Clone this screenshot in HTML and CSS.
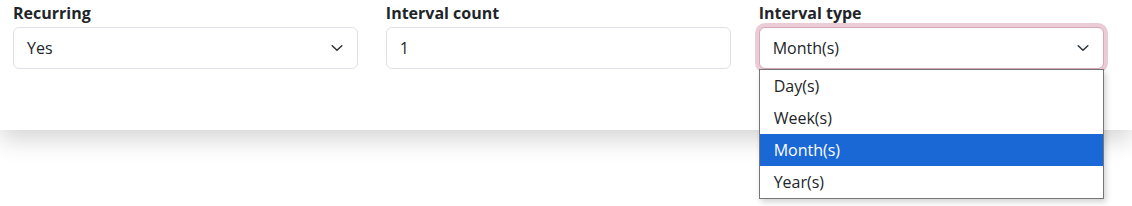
FILE: index.html
```html
<!DOCTYPE html>
<html lang="en">
<head>
  <meta charset="UTF-8">
  <meta name="viewport" content="width=device-width, initial-scale=1.0">
  <title>Recurring settings</title>
  <link rel="stylesheet" href="styles.css">
</head>
<body>

  <div class="card">
    <div class="row">

      <div class="field">
        <label class="field-label">Recurring</label>
        <div class="select">
          <span>Yes</span>
          <svg class="chevron" viewBox="0 0 16 16"><path d="m2 5 6 6 6-6"/></svg>
        </div>
      </div>

      <div class="field">
        <label class="field-label">Interval count</label>
        <div class="input">1</div>
      </div>

      <div class="field">
        <label class="field-label">Interval type</label>
        <div class="select focused">
          <span>Month(s)</span>
          <svg class="chevron" viewBox="0 0 16 16"><path d="m2 5 6 6 6-6"/></svg>
        </div>
        <!-- open native list -->
        <ul class="options">
          <li>Day(s)</li>
          <li>Week(s)</li>
          <li class="selected">Month(s)</li>
          <li>Year(s)</li>
        </ul>
      </div>

    </div>
  </div>

</body>
</html>
```

FILE: styles.css
```css
* {
  box-sizing: border-box;
  font-family: 'Open Sans', 'Noto Sans', sans-serif;
}

html, body {
  margin: 0;
  min-height: 206px;
  background-color: #fff;
}

.card {
  background: #fff;
  height: 130px;
  padding: 2px 28px 0 13px;
  box-shadow: 0 10px 22px rgba(0, 0, 0, 0.16);
  position: relative;
  z-index: 1;
}

.row {
  display: grid;
  grid-template-columns: repeat(3, 1fr);
  column-gap: 27.5px;
}

.field {
  position: relative;
}

.field-label {
  display: block;
  font-size: 16px;
  font-weight: 700;
  color: #212529;
  line-height: 22px;
  margin-bottom: 3px;
}

.input, .select {
  height: 42px;
  border: 1px solid #dee2e6;
  border-radius: 6px;
  padding: 0 13px;
  font-size: 16px;
  color: #212529;
  display: flex;
  align-items: center;
  background: #fff;
}

.select {
  justify-content: space-between;
}

.chevron {
  width: 16px;
  height: 16px;
  margin-right: -1px;
  fill: none;
  stroke: #343a40;
  stroke-width: 2;
  stroke-linecap: round;
  stroke-linejoin: round;
  transform: scale(0.8, 0.75);
}

/* focus state on the open select */
.select.focused {
  border-color: #d6a8b6;
  box-shadow: 0 0 0 4px #ebcbd5;
}

.options {
  position: absolute;
  top: 67px;
  left: 0;
  right: 0;
  margin: 0;
  padding: 0;
  list-style: none;
  background: #fff;
  border: 1px solid #767676;
  box-shadow: 2px 3px 6px rgba(0, 0, 0, 0.18);
  z-index: 2;
}

.options li {
  height: 32px;
  line-height: 32px;
  padding-left: 14px;
  font-size: 16px;
  color: #212529;
}

.options li.selected {
  background: #1a68d6;
  color: #fff;
}
```
